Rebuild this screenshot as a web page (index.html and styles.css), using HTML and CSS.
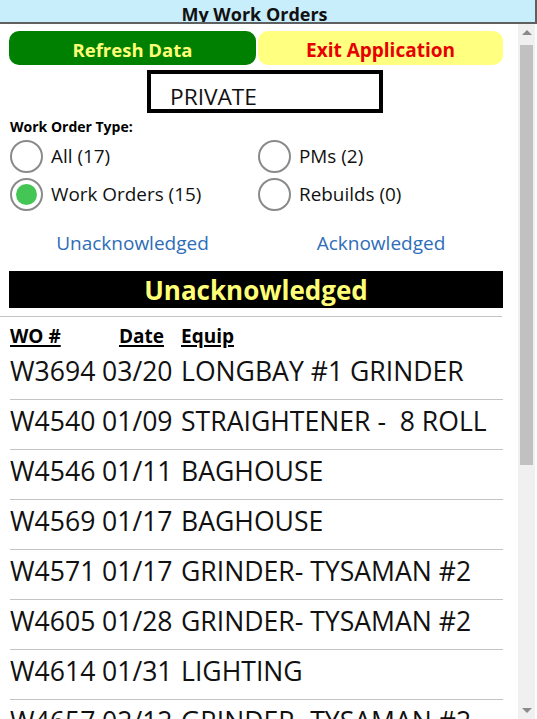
FILE: index.html
```html
<!DOCTYPE html>
<html>
<head>
<meta charset="utf-8">
<link rel="stylesheet" href="styles.css">
</head>
<body>
<div class="app">
  <header class="titlebar"><span class="title">My Work Orders</span></header>
  <div class="main">
    <div class="content">
      <div class="buttons">
        <div class="btn btn-refresh">Refresh Data</div>
        <div class="btn btn-exit">Exit Application</div>
      </div>
      <div class="private-wrap">
        <div class="private">PRIVATE</div>
      </div>
      <div class="type-label">Work Order Type:</div>
      <div class="radios">
        <div class="radio"><span class="circle"></span><span>All (17)</span></div>
        <div class="radio"><span class="circle"></span><span>PMs (2)</span></div>
        <div class="radio"><span class="circle checked"></span><span>Work Orders (15)</span></div>
        <div class="radio"><span class="circle"></span><span>Rebuilds (0)</span></div>
      </div>
      <div class="links">
        <span class="link">Unacknowledged</span>
        <span class="link">Acknowledged</span>
      </div>
      <div class="banner">Unacknowledged</div>
      <div class="divider"></div>
      <div class="list">
        <div class="row head"><span class="c1">WO #</span><span class="c2">Date</span><span class="c3">Equip</span></div>
        <div class="row item"><span class="c1">W3694</span><span class="c2">03/20</span><span class="c3">LONGBAY #1 GRINDER</span></div>
        <div class="row item"><span class="c1">W4540</span><span class="c2">01/09</span><span class="c3">STRAIGHTENER -&nbsp; 8 ROLL</span></div>
        <div class="row item"><span class="c1">W4546</span><span class="c2">01/11</span><span class="c3">BAGHOUSE</span></div>
        <div class="row item"><span class="c1">W4569</span><span class="c2">01/17</span><span class="c3">BAGHOUSE</span></div>
        <div class="row item"><span class="c1">W4571</span><span class="c2">01/17</span><span class="c3">GRINDER- TYSAMAN #2</span></div>
        <div class="row item"><span class="c1">W4605</span><span class="c2">01/28</span><span class="c3">GRINDER- TYSAMAN #2</span></div>
        <div class="row item"><span class="c1">W4614</span><span class="c2">01/31</span><span class="c3">LIGHTING</span></div>
        <div class="row item"><span class="c1">W4657</span><span class="c2">02/12</span><span class="c3">GRINDER- TYSAMAN #2</span></div>
      </div>
    </div>
    <div class="scrollbar">
      <div class="arrow up"></div>
      <div class="track"><div class="thumb"></div></div>
      <div class="arrow down"></div>
    </div>
  </div>
</div>
</body>
</html>
```
FILE: styles.css
```css
* { box-sizing: border-box; }
html, body { margin: 0; padding: 0; background: #fff; }
body { font-family: "Open Sans", "Noto Sans", sans-serif; color: #000; }
.app { width: 537px; height: 719px; overflow: hidden; display: flex; flex-direction: column; }
.titlebar {
  height: 24px; flex: none;
  background: #c8eefc;
  border-bottom: 2px solid #5f5f5f;
  border-right: 2px solid #5f5f5f;
  display: flex; justify-content: center; align-items: flex-end;
  padding-right: 26px;
  overflow: hidden;
}
.title { font-weight: 700; font-size: 18px; line-height: 20px; margin-bottom: -2px; color: #111; }
.main { flex: 1; display: flex; min-height: 0; }
.content { width: 518px; flex: none; overflow: hidden; padding-top: 7px; }
.buttons { display: flex; gap: 2px; padding-left: 9px; width: 503px; }
.btn {
  flex: 1; height: 34px; border-radius: 10px;
  display: flex; align-items: center; justify-content: center;
  font-weight: 700; padding-top: 3px;
}
.btn-refresh { background: #008000; color: #ffff77; width: 247px; flex: none; font-size: 18.5px; }
.btn-exit { background: #ffff80; color: #e60000; font-size: 19px; }
.private-wrap { display: flex; justify-content: flex-start; padding-left: 147px; margin-top: 5px; width: 518px; }
.private {
  width: 236px; height: 43px; border: 4px solid #000;
  font-size: 22.7px; line-height: 1; padding: 12px 0 0 19px; color: #111;
}
.type-label { font-weight: 700; font-size: 14px; margin: 5px 0 0 10px; line-height: 17px; }
.radios {
  display: grid; grid-template-columns: 248px 248px; row-gap: 4px;
  padding-left: 10px; margin-top: 4px;
}
.radio { display: flex; align-items: center; gap: 8px; height: 34px; font-size: 18.9px; color: #111; }
.circle {
  width: 33px; height: 33px; border-radius: 50%;
  border: 2px solid #8a8a8a; background: #fff; flex: none;
  display: flex; align-items: center; justify-content: center;
}
.circle.checked::after {
  content: ""; width: 21px; height: 21px; border-radius: 50%; background: #44c655;
}
.links { display: grid; grid-template-columns: 247px 246px; column-gap: 2px; padding-left: 9px; margin-top: 20px; }
.link { text-align: center; color: #2e6db8; font-size: 19px; line-height: 24px; }
.banner {
  margin: 16px 0 0 9px; width: 494px; height: 37px; background: #000;
  color: #ffff77; font-weight: 700; font-size: 26px; line-height: 38px; text-align: center;
}
.divider { margin-top: 8px; width: 502px; height: 1px; background: #c4c4c4; }
.list { padding-left: 10px; width: 503px; }
.row { display: grid; grid-template-columns: 92px 79px 1fr; }
.row.head { height: 33px; align-items: end; font-weight: 700; font-size: 19px; line-height: 22px; padding-bottom: 3px; }
.row.head span { text-decoration: underline; text-underline-offset: 2px; text-decoration-thickness: 1.5px; }
.row.head .c2 { padding-left: 17px; }
.row.item { height: 50px; align-items: center; font-size: 26.6px; border-bottom: 1px solid #c4c4c4; color: #111; padding-bottom: 8px; }
.scrollbar { width: 17px; flex: none; background: #f0f0f0; display: flex; flex-direction: column; }
.arrow { height: 17px; flex: none; display: flex; align-items: center; justify-content: center; }
.arrow.up::after { content: ""; border-left: 5px solid transparent; border-right: 5px solid transparent; border-bottom: 5px solid #8a8a8a; }
.arrow.down::after { content: ""; border-left: 5px solid transparent; border-right: 5px solid transparent; border-top: 5px solid #8a8a8a; }
.track { flex: 1; padding: 4px 2px 0; }
.thumb { height: 420px; background: #c1c1c1; }
```
